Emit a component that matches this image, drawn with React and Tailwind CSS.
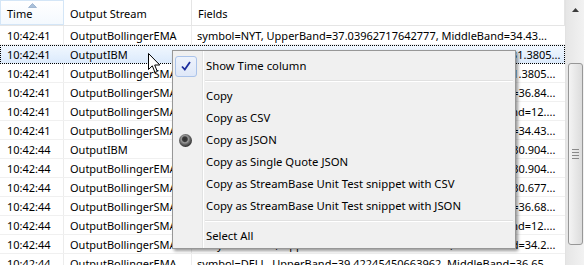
import React from "react";

const rows = [
  { time: "10:42:41", stream: "OutputBollingerEMA", fields: "symbol=NYT, UpperBand=37.03962717642777, MiddleBand=34.43...", left: true },
  { time: "10:42:41", stream: "OutputIBM", fields: "symbol=IBM, UpperBand=34.64312354767753, MiddleBand=31.3805...", left: true, selected: true },
  { time: "10:42:41", stream: "OutputBollingerSMA", fields: "symbol=IBM, UpperBand=34.64312354767753, MiddleBand=31.3805..." },
  { time: "10:42:41", stream: "OutputBollingerSMA", fields: "symbol=GE, UpperBand=39.01233871265431, MiddleBand=36.84..." },
  { time: "10:42:41", stream: "OutputBollingerSMA", fields: "symbol=DELL, UpperBand=13.4410023871234, MiddleBand=12...." },
  { time: "10:42:41", stream: "OutputBollingerSMA", fields: "symbol=NYT, UpperBand=37.03962717642777, MiddleBand=34.43..." },
  { time: "10:42:44", stream: "OutputIBM", fields: "symbol=IBM, UpperBand=33.10472218734561, MiddleBand=30.904..." },
  { time: "10:42:44", stream: "OutputBollingerEMA", fields: "symbol=IBM, UpperBand=33.10472218734561, MiddleBand=30.904..." },
  { time: "10:42:44", stream: "OutputBollingerSMA", fields: "symbol=IBM, UpperBand=32.98127640012387, MiddleBand=30.677..." },
  { time: "10:42:44", stream: "OutputBollingerSMA", fields: "symbol=GE, UpperBand=38.87123412309876, MiddleBand=36.68..." },
  { time: "10:42:44", stream: "OutputBollingerSMA", fields: "symbol=DELL, UpperBand=13.2209871234112, MiddleBand=12...." },
  { time: "10:42:44", stream: "OutputBollingerSMA", fields: "symbol=NYT, UpperBand=36.71234987612345, MiddleBand=34.2..." },
  { time: "10:42:44", stream: "OutputBollingerEMA", fields: "symbol=DELL, UpperBand=39.42245450663962, MiddleBand=36.65...", left: true },
];

const menuItems = [
  { label: "Copy" },
  { label: "Copy as CSV" },
  { label: "Copy as JSON", radio: true },
  { label: "Copy as Single Quote JSON" },
  { label: "Copy as StreamBase Unit Test snippet with CSV" },
  { label: "Copy as StreamBase Unit Test snippet with JSON" },
];

const Gutter = ({ children }) => (
  <div className="w-[30px] shrink-0 h-full border-r border-[#e2e3e3] flex items-center">
    {children}
  </div>
);

const MenuItem = ({ label, icon }) => (
  <div className="flex h-[22px] items-stretch">
    <Gutter>{icon}</Gutter>
    <div className="flex-1 border-l border-white pl-[2px] flex items-center text-black">
      {label}
    </div>
  </div>
);

const Separator = () => (
  <div className="flex h-[8px] items-stretch">
    <Gutter />
    <div className="flex-1 border-l border-white flex items-center pl-[1px] pr-[2px]">
      <div className="w-full border-t border-[#e0e0e0] border-b border-b-white" />
    </div>
  </div>
);

const CheckIcon = () => (
  <div className="ml-[2px] w-[22px] h-[21px] rounded-[3px] border border-[#aac3ea] bg-gradient-to-b from-[#eef3fc] to-[#dfe8f8] flex items-center justify-center">
    <svg width="12" height="12" viewBox="0 0 12 12">
      <path d="M2 6.5 L4.8 9.5 L10 2" fill="none" stroke="#1c2d9e" strokeWidth="1.8" />
    </svg>
  </div>
);

const RadioIcon = () => (
  <div className="ml-[5px] flex items-center">
    <svg width="15" height="15" viewBox="0 0 15 15">
      <defs>
        <radialGradient id="rg" cx="45%" cy="40%" r="60%">
          <stop offset="0%" stopColor="#2e2e2e" />
          <stop offset="30%" stopColor="#3a3a3a" />
          <stop offset="45%" stopColor="#9a9a9a" />
          <stop offset="65%" stopColor="#6a6a6a" />
          <stop offset="100%" stopColor="#2a2a2a" />
        </radialGradient>
      </defs>
      <circle cx="7.5" cy="7.5" r="6.5" fill="url(#rg)" />
    </svg>
  </div>
);

const App = () => {
  return (
    <div className="relative w-[584px] h-[265px] overflow-hidden bg-white text-[11px] leading-none text-black font-['Noto_Sans','Open_Sans',sans-serif]">
      <div className="flex h-full">
        {/* grid */}
        <div className="flex-1 flex flex-col">
          <div className="flex h-[26px] shrink-0 border-b border-[#e5e5e5]">
            <div className="relative w-[64px] shrink-0 border border-[#d4e6f7] bg-gradient-to-b from-white to-[#f4f9fe] flex items-center pl-[6px] pt-[2px]">
              <svg className="absolute left-[27px] top-[2px]" width="9" height="5" viewBox="0 0 9 5">
                <path d="M0.5 4.5 L4.5 0.5 L8.5 4.5 Z" fill="#a9c0da" stroke="#7f9cc0" strokeWidth="0.6" />
              </svg>
              Time
            </div>
            <div className="w-[128px] shrink-0 border-r border-[#e5e5e5] flex items-center pl-[6px] pt-[2px]">
              Output Stream
            </div>
            <div className="flex-1 flex items-center pl-[6px] pt-[2px] border-r border-[#e5e5e5]">Fields</div>
          </div>
          {rows.map((r, i) => (
            <div
              key={i}
              className={`flex h-[19px] shrink-0 border-b ${
                r.selected
                  ? "border-transparent outline-1 outline-dotted outline-black -outline-offset-1 bg-gradient-to-b from-[#f2f8fe] to-[#dbeafc]"
                  : "border-[#f0f0f0]"
              }`}
            >
              <div className={`w-[64px] shrink-0 flex items-center pl-[7px] border-r ${r.selected ? "border-transparent" : "border-[#ececec]"}`}>
                {r.time}
              </div>
              <div className={`w-[128px] shrink-0 flex items-center pl-[6px] whitespace-nowrap overflow-hidden border-r ${r.selected ? "border-transparent" : "border-[#ececec]"}`}>
                {r.stream}
              </div>
              <div
                className={`flex-1 flex items-center whitespace-nowrap overflow-hidden ${
                  r.left ? "justify-start pl-[5px]" : "justify-end pr-[10px]"
                }`}
              >
                <span className="shrink-0">{r.fields}</span>
              </div>
            </div>
          ))}
        </div>

        {/* scrollbar */}
        <div className="w-[19px] shrink-0 flex flex-col bg-gradient-to-r from-[#e6e6e6] to-[#f2f2f2] border-l border-[#e2e2e2]">
          <div className="h-[20px] flex items-center justify-center">
            <svg width="7" height="4" viewBox="0 0 7 4">
              <path d="M0 4 L3.5 0 L7 4 Z" fill="#3c3c3c" />
            </svg>
          </div>
          <div className="h-[43px]" />
          <div className="ml-[2px] mr-[1px] h-[182px] rounded-[3px] border border-[#979797] bg-gradient-to-r from-[#f4f4f4] to-[#dcdcdc] flex flex-col items-center justify-center gap-[2px]">
            <div className="w-[7px] border-t border-[#8a8a8a]" />
            <div className="w-[7px] border-t border-[#8a8a8a]" />
            <div className="w-[7px] border-t border-[#8a8a8a]" />
            <div className="w-[7px] border-t border-[#8a8a8a]" />
          </div>
        </div>
      </div>

      {/* context menu */}
      <div className="absolute left-[172px] top-[50px] w-[344px] border border-[#979797] bg-[#f0f0f0] text-[11.3px] shadow-[2px_2px_3px_rgba(0,0,0,0.4)] flex flex-col">
        <div className="flex h-[4px]">
          <Gutter />
          <div className="flex-1 border-l border-white" />
        </div>
        <MenuItem label="Show Time column" icon={<CheckIcon />} />
        <Separator />
        {menuItems.map((m) => (
          <MenuItem key={m.label} label={m.label} icon={m.radio ? <RadioIcon /> : null} />
        ))}
        <Separator />
        <MenuItem label="Select All" />
        <div className="flex h-[1px]">
          <Gutter />
          <div className="flex-1 border-l border-white" />
        </div>
      </div>

      {/* mouse pointer */}
      <svg className="absolute left-[148px] top-[53px]" width="13" height="21" viewBox="0 0 13 21">
        <path d="M0.5 0.5 L0.5 16.5 L4.3 12.8 L7 19.5 L9.3 18.5 L6.7 12 L11.8 12 Z" fill="white" stroke="black" strokeWidth="1" />
      </svg>
    </div>
  );
};

export default App;
